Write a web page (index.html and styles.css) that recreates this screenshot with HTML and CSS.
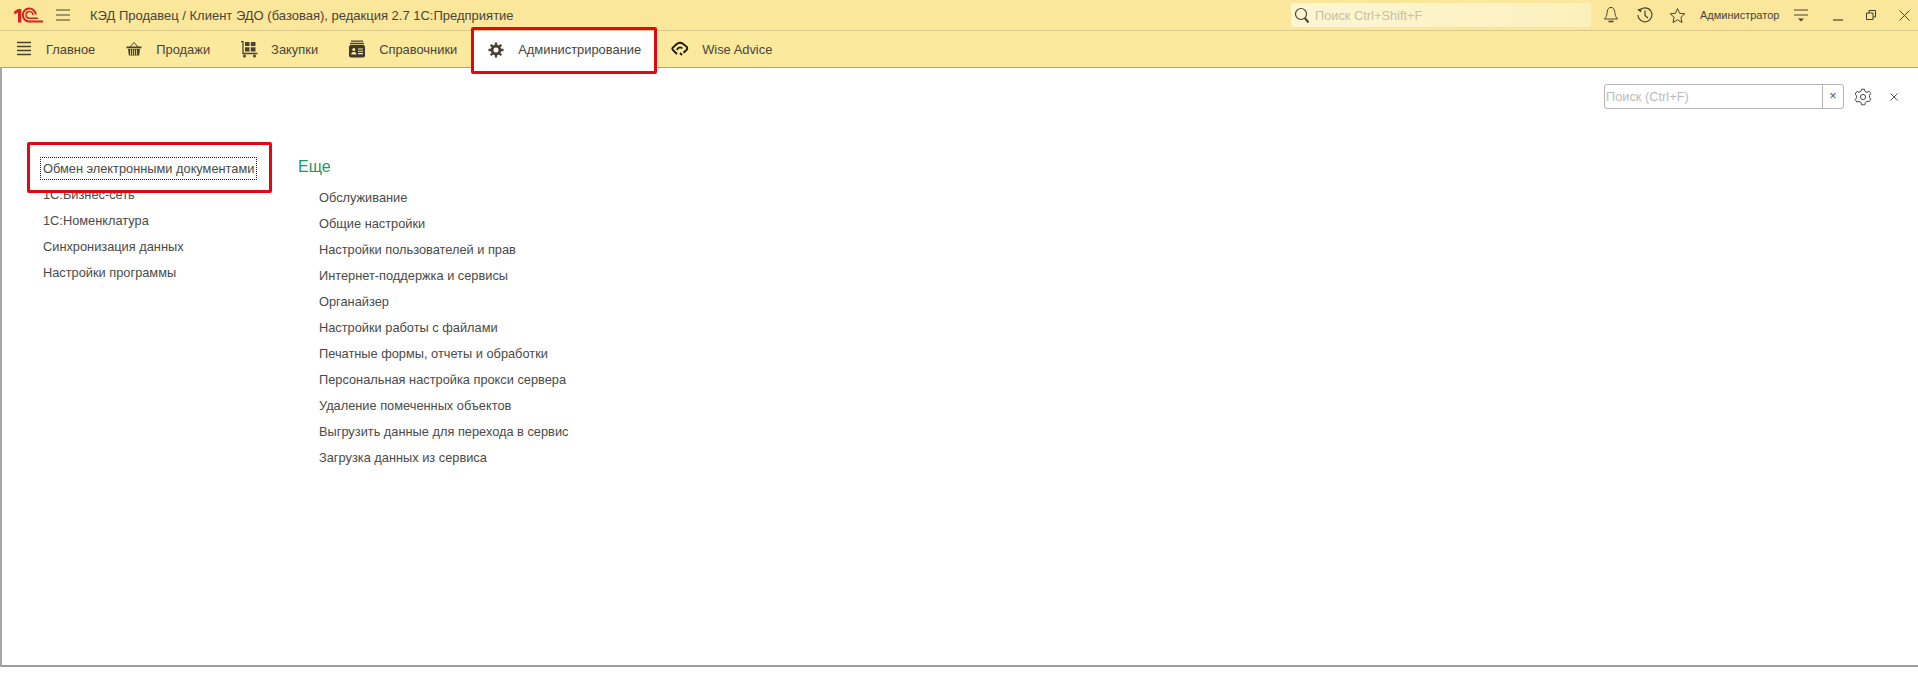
FILE: index.html
```html
<!DOCTYPE html>
<html lang="ru">
<head>
<meta charset="utf-8">
<title>КЭД Продавец</title>
<link rel="stylesheet" href="styles.css">
</head>
<body>
<header class="titlebar">
  <svg class="logo" width="30" height="17" viewBox="0 0 30 17"><path d="M1 4.500 5 2H8.300V15.500H5V5.500L1.500 7.500Z" fill="#d6231c"/><path d="M22.800 7.500A6.500 6.500 0 1 0 16 14.500H30" fill="none" stroke="#d6231c" stroke-width="2"/><path d="M19.800 8A3.400 3.400 0 1 0 16 11.200H25" fill="none" stroke="#d6231c" stroke-width="1.500"/></svg>
  <svg class="burger" width="14" height="12" viewBox="0 0 14 12"><path d="M0 1H14M0 6H14M0 11H14" stroke="#4a4236" stroke-width="1"/></svg>
  <div class="apptitle">КЭД Продавец / Клиент ЭДО (базовая), редакция 2.7 1С:Предприятие</div>
  <div class="globalsearch">
    <svg width="16" height="17" viewBox="0 0 16 17"><circle cx="7" cy="7" r="5.500" fill="none" stroke="#4a4236" stroke-width="1.200"/><path d="M10.800 11 14.500 15.500" stroke="#4a4236" stroke-width="2"/></svg>
    <span>Поиск Ctrl+Shift+F</span>
  </div>
  <div class="tools">
    <svg class="t-bell" width="16" height="18" viewBox="0 0 16 18"><path d="M8 1.500C5 1.500 4.400 4 4 7.500 3.700 10 2.800 11.500 1.500 13H14.500C13.200 11.500 12.300 10 12 7.500 11.600 4 11 1.500 8 1.500Z" fill="none" stroke="#4a4236"/><path d="M5.500 15.500H10.500" stroke="#4a4236" stroke-width="1.600"/></svg>
    <svg class="t-clock" width="18" height="18" viewBox="0 0 18 18"><path d="M3.500 4.500A7 7 0 1 1 2 9" fill="none" stroke="#4a4236" stroke-width="1.100"/><path d="M1 3.500 5.500 2.500 5 6.500Z" fill="#4a4236"/><path d="M9 4.500V9.500L12 12" fill="none" stroke="#4a4236" stroke-width="1.200"/></svg>
    <svg class="t-star" width="17" height="17" viewBox="0 0 17 17"><path d="M8.500 1.500 10.600 6.300 15.800 6.800 11.900 10.300 13 15.500 8.500 12.800 4 15.500 5.100 10.300 1.200 6.800 6.400 6.300Z" fill="none" stroke="#4a4236" stroke-linejoin="round"/></svg>
    <span class="user">Администратор</span>
    <svg class="t-more" width="14" height="13" viewBox="0 0 14 13"><path d="M0 1H14M0 6H14" stroke="#4a4236"/><path d="M4 9.500H10L7 12.500Z" fill="#4a4236"/></svg>
    <svg class="t-min" width="10" height="4" viewBox="0 0 10 4"><path d="M0 2H10" stroke="#4a4236" stroke-width="1.200"/></svg>
    <svg class="t-max" width="10" height="10" viewBox="0 0 10 10"><path d="M0.500 3H7V9.500H0.500ZM3 3V0.500H9.500V7H7" fill="none" stroke="#3f382c"/></svg>
    <svg class="t-close" width="11" height="11" viewBox="0 0 11 11"><path d="M0.500 0.500 10.500 10.500M10.500 0.500 0.500 10.500" stroke="#4a4236"/></svg>
  </div>
</header>

<nav class="sections">
  <a class="section">
    <svg class="ic" width="20" height="16" viewBox="0 0 20 16"><path d="M3 1.500H17M3 5.500H17M3 9.500H17M3 13.500H17" stroke="#4a4236" stroke-width="1.700"/></svg>
    <span>Главное</span>
  </a>
  <a class="section">
    <svg class="ic" width="20" height="16" viewBox="0 0 20 16"><path d="M6 6 10 1.500 14 6" fill="none" stroke="#4a4236"/><rect x="2.500" y="5.500" width="15" height="1.800" fill="#4a4236"/><path d="M4 8H16L15.200 14.500H4.800Z" fill="#4a4236"/><path d="M6.500 8.500V14M8.500 8.500V14M10.500 8.500V14M12.500 8.500V14" stroke="#fbe99d" stroke-width=".8"/></svg>
    <span>Продажи</span>
  </a>
  <a class="section">
    <svg class="ic" width="20" height="17" viewBox="0 0 20 17"><path d="M2 .5H4V12.500H18.500" fill="none" stroke="#4a4236" stroke-width="1.300"/><path d="M6 1H10.500V5H6ZM11.800 1H16.500V5H11.800ZM6 6.300H10.500V10.500H6ZM11.800 6.300H16.500V10.500H11.800Z" fill="#4a4236"/><circle cx="5.500" cy="15" r="1.500" fill="#4a4236"/><circle cx="15.500" cy="15" r="1.500" fill="#4a4236"/></svg>
    <span>Закупки</span>
  </a>
  <a class="section">
    <svg class="ic" width="20" height="18" viewBox="0 0 20 18"><path d="M4 .5H16V1.800H4ZM3 2.800H17V4.200H3Z" fill="#4a4236"/><rect x="2" y="5" width="16" height="12.500" rx="2" fill="#3f382c"/><circle cx="6.800" cy="9.500" r="1.500" fill="#fbe99d"/><path d="M4.200 14.500C4.200 12.500 5.500 12 6.800 12S9.400 12.500 9.400 14.500Z" fill="#fbe99d"/><path d="M11 9H16M11 11.300H16M11 13.600H16" stroke="#fbe99d" stroke-width="1.100"/></svg>
    <span>Справочники</span>
  </a>
  <a class="section active">
    <svg class="ic" width="20" height="16" viewBox="0 0 20 16"><path d="M10 2.600A5.400 5.400 0 1 0 10 13.400 5.400 5.400 0 1 0 10 2.600ZM10 5.500A2.500 2.500 0 1 1 10 10.500 2.500 2.500 0 1 1 10 5.500Z" fill="#4a4236" fill-rule="evenodd"/><path d="M10 .5V15.500M2.500 8H17.500M4.700 2.700 15.300 13.300M15.300 2.700 4.700 13.300" stroke="#4a4236" stroke-width="2.300" stroke-dasharray="3.200 8.600"/></svg>
    <span>Администрирование</span>
  </a>
  <a class="section">
    <svg class="ic" width="20" height="16" viewBox="0 0 20 16"><path d="M7 13 2.800 8.800C2.200 8 2.200 7.200 2.800 6.600L6.500 3.200C8.500 1.500 11 1.400 13 2.800L16.500 5.600C17.500 6.600 17.500 8 16.500 9L13.500 11.800" fill="none" stroke="#1c1a16" stroke-width="1.900"/><path d="M7 9C7.500 6.500 10.800 5.500 12.300 7.600" fill="none" stroke="#1c1a16" stroke-width="1.800"/><path d="M12 14 10 12" stroke="#1c1a16" stroke-width="1.800"/></svg>
    <span>Wise Advice</span>
  </a>
</nav>

<main class="page">
  <div class="formbar">
    <div class="formsearch">
      <span class="fs-text">Поиск (Ctrl+F)</span>
      <span class="fs-clear">×</span>
    </div>
    <svg class="fb-gear" width="18" height="18" viewBox="0 0 18 18"><path d="M7.500 1.200H10.500L11 3.500 13 4.400 15 3.200 16.800 5.500 15.400 7.300 15.500 9.500 16.800 11.200 15.300 13.600 13.100 13.200 11.400 14.500 10.800 16.800H7.600L7 14.500 5 13.500 2.900 14 1.200 11.600 2.600 9.800V7.800L1.200 6 2.900 3.400 5 4.200 7 3.300Z" fill="none" stroke="#4a4a4a" stroke-linejoin="round"/><circle cx="9" cy="9" r="2.600" fill="none" stroke="#4a4a4a"/></svg>
    <svg class="fb-close" width="8" height="8" viewBox="0 0 8 8"><path d="M.5 .5 7.500 7.500M7.500 .5 .5 7.500" stroke="#555"/></svg>
  </div>
  <div class="columns">
    <ul class="links col-left">
      <li class="focused"><span>Обмен электронными документами</span></li>
      <li>1С:Бизнес-сеть</li>
      <li>1С:Номенклатура</li>
      <li>Синхронизация данных</li>
      <li>Настройки программы</li>
    </ul>
    <section class="col-right">
      <h2>Еще</h2>
      <ul class="links">
        <li>Обслуживание</li>
        <li>Общие настройки</li>
        <li>Настройки пользователей и прав</li>
        <li>Интернет-поддержка и сервисы</li>
        <li>Органайзер</li>
        <li>Настройки работы с файлами</li>
        <li>Печатные формы, отчеты и обработки</li>
        <li>Персональная настройка прокси сервера</li>
        <li>Удаление помеченных объектов</li>
        <li>Выгрузить данные для перехода в сервис</li>
        <li>Загрузка данных из сервиса</li>
      </ul>
    </section>
  </div>
</main>

<div class="mark mark-tab"></div>
<div class="mark mark-link"></div>
</body>
</html>
```

FILE: styles.css
```css
* { box-sizing: border-box; }
html, body { margin: 0; padding: 0; }
body {
  width: 1918px;
  height: 676px;
  position: relative;
  overflow: hidden;
  background: #fff;
  font-family: "Liberation Sans", Arial, sans-serif;
  font-size: 12.8px;
  color: #4a4a48;
}
.titlebar {
  height: 31px;
  display: flex;
  align-items: center;
  background: #fae79b;
  border-bottom: 1px solid #d9c98a;
}
.logo { margin-left: 13px; flex: none; }
.burger { margin-left: 13px; flex: none; }
.apptitle { margin-left: 20px; color: #4a4438; white-space: nowrap; width: 1201px; flex: none; font-size: 13px; }
.globalsearch {
  flex: none;
  width: 300px;
  height: 24px;
  display: flex;
  align-items: center;
  gap: 5px;
  padding-left: 3px;
  background: linear-gradient(90deg, #fdf6d2, #fcf0bd);
  border-radius: 3px;
  color: #c4bfa8;
}
.tools { flex: none; display: flex; align-items: center; height: 30px; position: relative; }
.t-bell { margin-left: 12px; }
.t-clock { margin-left: 17px; }
.t-star { margin-left: 15px; }
.user { margin-left: 14px; font-size: 11px; color: #4a4438; white-space: nowrap; width: 82px; }
.t-more { margin-left: 12px; }
.t-min { margin-left: 25px; margin-top: 10px; }
.t-max { margin-left: 23px; }
.t-close { margin-left: 23px; }

.sections {
  height: 37px;
  display: flex;
  align-items: stretch;
  background: #fbe99d;
  border-bottom: 1px solid #a9a48f;
  font-size: 12.9px;
}
.section {
  display: flex;
  align-items: center;
  gap: 12px;
  padding: 0 15px 0 14px;
  color: #4a4438;
  white-space: nowrap;
}
.section.active { background: #fff; height: 37px; }
.ic { flex: none; }

.page {
  height: 599px;
  border-left: 2px solid #a8a8a8;
  border-bottom: 2px solid #a0a0a0;
  padding-top: 16px;
}
.formbar { display: flex; align-items: center; justify-content: flex-end; height: 25px; }
.formsearch {
  width: 240px;
  height: 25px;
  display: flex;
  border: 1px solid #b4b4b4;
  border-radius: 3px;
}
.fs-text { flex: 1; padding-left: 1px; line-height: 23px; color: #bcbcbc; }
.fs-clear { width: 21px; border-left: 1px solid #b4b4b4; text-align: center; line-height: 22px; color: #555; }
.fb-gear { margin-left: 10px; }
.fb-close { margin-left: 18px; margin-right: 20px; }

.columns { display: flex; padding-left: 41px; margin-top: 47px; }
.links { list-style: none; margin: 0; padding: 0; }
.links li { height: 26px; line-height: 26px; white-space: nowrap; }
.col-left { width: 255px; }
.focused span { outline: 1px dotted #222; padding: 3px 2px; margin-left: -2px; }
.col-right h2 { margin: 0 0 5px; font-size: 16px; font-weight: 400; line-height: 24px; color: #1a9a62; position: relative; top: -1px; }
.col-right .links { padding-left: 21px; }

.mark { position: absolute; border: 3px solid #e30613; border-radius: 2px; }
.mark-tab { left: 471px; top: 27px; width: 186px; height: 47px; }
.mark-link { left: 27px; top: 142px; width: 245px; height: 51px; }
```
